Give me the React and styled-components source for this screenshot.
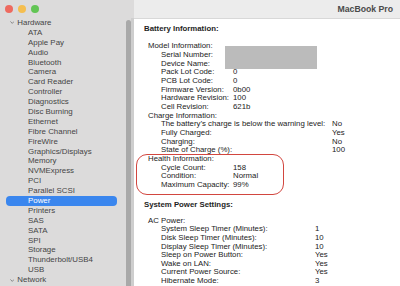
import React from 'react';
import styled, { createGlobalStyle } from 'styled-components';

const GlobalStyle = createGlobalStyle`
  html, body {
    margin: 0;
    padding: 0;
    overflow: hidden;
  }
  body {
    font-family: "Liberation Sans", Arial, sans-serif;
    -webkit-font-smoothing: antialiased;
  }
`;

const hardware = [
  'ATA', 'Apple Pay', 'Audio', 'Bluetooth', 'Camera', 'Card Reader', 'Controller',
  'Diagnostics', 'Disc Burning', 'Ethernet', 'Fibre Channel', 'FireWire',
  'Graphics/Displays', 'Memory', 'NVMExpress', 'PCI', 'Parallel SCSI', 'Power',
  'Printers', 'SAS', 'SATA', 'SPI', 'Storage', 'Thunderbolt/USB4', 'USB',
];

const modelRows = [
  ['Serial Number:', ''],
  ['Device Name:', ''],
  ['Pack Lot Code:', '0'],
  ['PCB Lot Code:', '0'],
  ['Firmware Version:', '0b00'],
  ['Hardware Revision:', '100'],
  ['Cell Revision:', '621b'],
];

const chargeRows = [
  ["The battery\u2019s charge is below the warning level:", 'No'],
  ['Fully Charged:', 'Yes'],
  ['Charging:', 'No'],
  ['State of Charge (%):', '100'],
];

const healthRows = [
  ['Cycle Count:', '158'],
  ['Condition:', 'Normal'],
  ['Maximum Capacity:', '99%'],
];

const powerRows = [
  ['System Sleep Timer (Minutes):', '1'],
  ['Disk Sleep Timer (Minutes):', '10'],
  ['Display Sleep Timer (Minutes):', '10'],
  ['Sleep on Power Button:', 'Yes'],
  ['Wake on LAN:', 'Yes'],
  ['Current Power Source:', 'Yes'],
  ['Hibernate Mode:', '3'],
];

function InfoRows({ rows, label }) {
  return (
    <Rows $label={label}>
      {rows.map(([k, v]) => (
        <React.Fragment key={k}>
          <span>{k}</span>
          <span>{v}</span>
        </React.Fragment>
      ))}
    </Rows>
  );
}

function App() {
  return (
    <>
      <GlobalStyle />
      <Window>
        <Sidebar>
          <Lights>
            <Light $color="#ee6a5f" />
            <Light $color="#f5be4f" />
            <Light $color="#62c554" />
          </Lights>
          <SidebarBody>
            <List>
              <Category>
                <Chevron viewBox="0 0 6 4">
                  <polyline points="0.6,0.6 3,3.2 5.4,0.6" />
                </Chevron>
                Hardware
              </Category>
              {hardware.map((name) => (
                <Item key={name} $selected={name === 'Power'}>{name}</Item>
              ))}
              <Category>
                <Chevron viewBox="0 0 6 4">
                  <polyline points="0.6,0.6 3,3.2 5.4,0.6" />
                </Chevron>
                Network
              </Category>
            </List>
            <ScrollTrack>
              <Thumb />
            </ScrollTrack>
          </SidebarBody>
        </Sidebar>

        <Main>
          <TitleBar>
            <Title>MacBook Pro</Title>
          </TitleBar>
          <Body>
            <SectionTitle>Battery Information:</SectionTitle>

            <Group $top={8.7}>
              <GroupTitle>Model Information:</GroupTitle>
              <InfoRows rows={modelRows} label={72} />
              <Redaction />
            </Group>

            <Group>
              <GroupTitle>Charge Information:</GroupTitle>
              <InfoRows rows={chargeRows} label={171} />
            </Group>

            <Group>
              <GroupTitle>Health Information:</GroupTitle>
              <InfoRows rows={healthRows} label={72} />
              <Oval />
            </Group>

            <SectionTitle $top={11}>System Power Settings:</SectionTitle>

            <Group $top={7.4}>
              <GroupTitle>AC Power:</GroupTitle>
              <InfoRows rows={powerRows} label={154} />
            </Group>
          </Body>
        </Main>
      </Window>
    </>
  );
}

const Window = styled.div`
  display: flex;
  width: 400px;
  height: 286px;
  overflow: hidden;
  background: #ffffff;
`;

const Sidebar = styled.aside`
  width: 134px;
  flex-shrink: 0;
  display: flex;
  flex-direction: column;
  background: #dcdbdb;
`;

const Lights = styled.div`
  height: 18px;
  display: flex;
  align-items: center;
  gap: 5.3px;
  padding-left: 4.7px;
  flex-shrink: 0;
`;

const Light = styled.span`
  width: 8px;
  height: 8px;
  border-radius: 50%;
  background: ${(p) => p.$color};
`;

const SidebarBody = styled.div`
  flex: 1;
  display: flex;
  min-height: 0;
`;

const List = styled.ul`
  flex: 1;
  list-style: none;
  margin: 0;
  padding: 0;
  overflow: hidden;
  font-size: 7.9px;
  color: #454545;
`;

const Category = styled.li`
  height: 9.9px;
  line-height: 9.9px;
  display: flex;
  align-items: center;
  padding-left: 9.5px;
  white-space: nowrap;
`;

const Chevron = styled.svg`
  width: 4.5px;
  height: 3px;
  margin-right: 3.3px;
  fill: none;
  stroke: #707070;
  stroke-width: 1;
`;

const Item = styled.li`
  height: 9.9px;
  line-height: 9.9px;
  margin-left: 6px;
  width: 111px;
  padding-left: 22px;
  box-sizing: border-box;
  border-radius: 4px;
  white-space: nowrap;
  background: ${(p) => (p.$selected ? '#3a86ee' : 'transparent')};
  color: ${(p) => (p.$selected ? '#ffffff' : 'inherit')};
`;

const ScrollTrack = styled.div`
  width: 8px;
  flex-shrink: 0;
  display: flex;
  padding-top: 2px;
  box-sizing: border-box;
  border-right: 3px solid #cecece;
`;

const Thumb = styled.div`
  width: 5px;
  flex: 1;
  background: #a9a9a9;
  border-radius: 2.5px 2.5px 0 0;
`;

const Main = styled.main`
  flex: 1;
  display: flex;
  flex-direction: column;
  min-width: 0;
`;

const TitleBar = styled.header`
  height: 18px;
  flex-shrink: 0;
  display: flex;
  align-items: center;
  justify-content: flex-end;
  padding-right: 7px;
  background: #ececec;
  border-bottom: 1px solid #d8d8d8;
`;

const Title = styled.h1`
  margin: 0;
  font-size: 8.7px;
  font-weight: bold;
  color: #4a4a4a;
`;

const Body = styled.section`
  flex: 1;
  padding: 6px 0 0 10px;
  font-size: 7.8px;
  line-height: 8.65px;
  color: #222222;
  white-space: nowrap;
  overflow: hidden;
`;

const SectionTitle = styled.h2`
  margin: ${(p) => p.$top || 0}px 0 0;
  font-size: 7.8px;
  line-height: 8.65px;
  font-weight: bold;
  color: #1e1e1e;
`;

const Group = styled.div`
  position: relative;
  margin-top: ${(p) => p.$top || 0}px;
  padding-left: 4px;
`;

const GroupTitle = styled.div``;

const Rows = styled.div`
  display: grid;
  grid-template-columns: ${(p) => p.$label}px auto;
  padding-left: 13px;
`;

const Redaction = styled.div`
  position: absolute;
  left: 81px;
  top: 3.3px;
  width: 92px;
  height: 23.3px;
  background: #bbbbbb;
`;

const Oval = styled.div`
  position: absolute;
  left: -8.5px;
  top: -0.6px;
  width: 146px;
  height: 39px;
  border: 1.6px solid #d2463f;
  border-radius: 11px;
  pointer-events: none;
`;

export default App;
